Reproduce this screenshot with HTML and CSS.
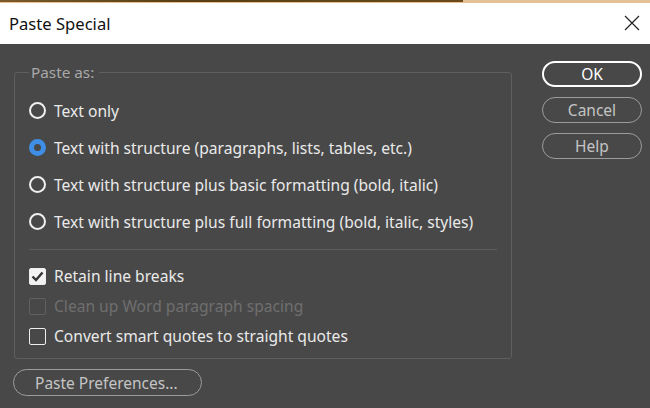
FILE: index.html
```html
<!DOCTYPE html>
<html>
<head>
<meta charset="utf-8">
<link rel="stylesheet" href="styles.css">
</head>
<body>
<div class="strip"><div class="strip-dark"></div></div>
<div class="titlebar">
  <span class="title">Paste Special</span>
  <svg class="close" width="16" height="16" viewBox="0 0 16 16"><path d="M1 1 L15 15 M15 1 L1 15" stroke="#222" stroke-width="1.2" fill="none"/></svg>
</div>
<div class="body">
  <div class="main">
    <fieldset class="group">
      <legend class="legend">Paste as:</legend>
      <div class="row radio-row"><span class="radio"></span><span class="label">Text only</span></div>
      <div class="row radio-row"><span class="radio on"></span><span class="label">Text with structure (paragraphs, lists, tables, etc.)</span></div>
      <div class="row radio-row"><span class="radio"></span><span class="label">Text with structure plus basic formatting (bold, italic)</span></div>
      <div class="row radio-row"><span class="radio"></span><span class="label">Text with structure plus full formatting (bold, italic, styles)</span></div>
      <div class="sep"></div>
      <div class="row check-row"><span class="check on"><svg width="13" height="11" viewBox="0 0 13 11"><path d="M1.5 5.5 L5 9 L11.5 1.5" stroke="#333" stroke-width="2.4" fill="none"/></svg></span><span class="label">Retain line breaks</span></div>
      <div class="row check-row disabled"><span class="check"></span><span class="label">Clean up Word paragraph spacing</span></div>
      <div class="row check-row"><span class="check"></span><span class="label">Convert smart quotes to straight quotes</span></div>
    </fieldset>
    <div class="prefs-wrap"><button class="btn prefs">Paste Preferences...</button></div>
  </div>
  <div class="side">
    <button class="btn ok">OK</button>
    <button class="btn">Cancel</button>
    <button class="btn">Help</button>
  </div>
</div>
</body>
</html>
```
FILE: styles.css
```css
html, body {
  margin: 0;
  padding: 0;
  width: 650px;
  height: 408px;
  overflow: hidden;
  background: #484848;
  font-family: "Noto Sans", "Open Sans", sans-serif;
}
.strip {
  height: 3px;
  background: #e4c097;
}
.strip-dark {
  width: 463px;
  height: 2px;
  background: linear-gradient(90deg, #7a5a2a, #5a3d12 40%, #6a4a18);
}
.titlebar {
  height: 41px;
  background: #ffffff;
  display: flex;
  align-items: center;
  justify-content: space-between;
  padding: 0 10px 0 9px;
}
.title {
  font-family: "Noto Sans", sans-serif;
  font-size: 16.6px;
  color: #111;
  margin-top: -1px;
}
.close {
  margin-top: -2px;
}
.body {
  display: flex;
  height: 364px;
}
.main {
  width: 512px;
  padding-left: 14px;
  box-sizing: border-box;
}
.group {
  margin: 18px 0 0 0;
  padding: 0 0 6px 14px;
  width: 498px;
  height: 297px;
  box-sizing: border-box;
  border: 1px solid #5f5f5f;
  border-radius: 3px;
}
.legend {
  color: #a9a9a9;
  font-size: 15.3px;
  padding: 0 5px 0 2px;
  margin-left: 0px;
  line-height: 20px;
}
.row {
  display: flex;
  align-items: center;
  color: #eaeaea;
  font-size: 15.6px;
}
.radio-row {
  height: 37px;
}
.radio-row:first-of-type {
  margin-top: 10px;
}
.radio {
  width: 13px;
  height: 13px;
  border: 2px solid #f0f0f0;
  border-radius: 50%;
  margin-right: 8px;
  flex: none;
}
.radio.on {
  width: 7px;
  height: 7px;
  border: 5px solid #3f8fe6;
}
.sep {
  height: 1px;
  background: #5c5c5c;
  margin: 9px 14px 11px 0;
}
.check-row {
  height: 30px;
}
.check {
  width: 15px;
  height: 15px;
  border: 1.5px solid #eeeeee;
  border-radius: 2px;
  margin-right: 8px;
  flex: none;
  display: flex;
  align-items: center;
  justify-content: center;
  box-sizing: content-box;
}
.check.on {
  background: #f2f2f2;
}
.disabled {
  color: #6f6f6f;
}
.disabled .check {
  border-color: #606060;
}
.prefs-wrap {
  margin-top: 10px;
  margin-left: -1px;
}
.btn {
  font-family: "Noto Sans", sans-serif;
  font-size: 15.5px;
  background: transparent;
  color: #c4c4c4;
  border: 1.5px solid #9c9c9c;
  border-radius: 14px;
  height: 27px;
  padding: 0;
  line-height: 20px;
  cursor: default;
}
.prefs {
  width: 189px;
  text-align: left;
  padding-left: 21px;
}
.side {
  display: flex;
  flex-direction: column;
  padding-left: 30px;
  padding-top: 17px;
  gap: 10px;
}
.side .btn {
  width: 100px;
  height: 26px;
}
.side .ok {
  border: 2.5px solid #ffffff;
  color: #ffffff;
}
```
